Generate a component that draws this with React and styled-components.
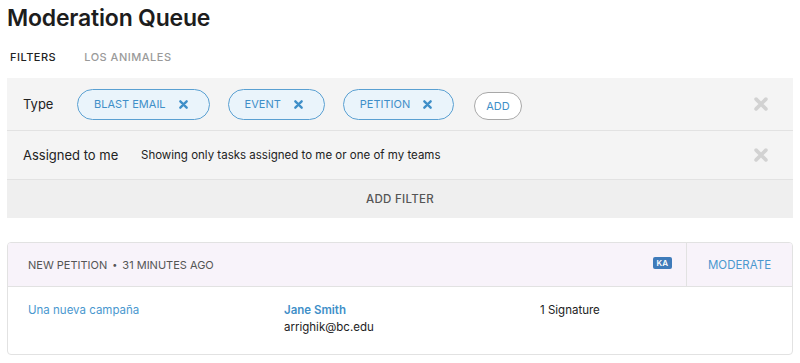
import styled, { createGlobalStyle } from "styled-components";

const GlobalStyle = createGlobalStyle`
  body {
    margin: 0;
    background: #fff;
    font-family: Inter, "Noto Sans", sans-serif;
    color: #222;
  }
`;

const filterTypes = ["BLAST EMAIL", "EVENT", "PETITION"];

const CloseIcon = ({ size = 10, color = "#3f8fc8" }) => (
  <svg width={size} height={size} viewBox="0 0 10 10">
    <path
      d="M1.5 1.5 L8.5 8.5 M8.5 1.5 L1.5 8.5"
      stroke={color}
      strokeWidth="2.6"
      strokeLinecap="round"
    />
  </svg>
);

const App = () => {
  return (
    <Page>
      <GlobalStyle />
      <Title>Moderation Queue</Title>
      <Tabs>
        <Tab active>FILTERS</Tab>
        <Tab>LOS ANIMALES</Tab>
      </Tabs>
      <FilterPanel>
        <FilterRow height={53}>
          <RowLabel width={54}>Type</RowLabel>
          <Pills>
            {filterTypes.map((it) => (
              <Pill key={it}>
                {it}
                <CloseIcon size={9} />
              </Pill>
            ))}
            <AddButton>ADD</AddButton>
          </Pills>
          <RemoveButton>
            <CloseIcon size={14} color="#d2d2d2" />
          </RemoveButton>
        </FilterRow>
        <FilterRow height={49}>
          <RowLabel width={118}>Assigned to me</RowLabel>
          <RowText>Showing only tasks assigned to me or one of my teams</RowText>
          <RemoveButton>
            <CloseIcon size={14} color="#d2d2d2" />
          </RemoveButton>
        </FilterRow>
        <AddFilter>ADD FILTER</AddFilter>
      </FilterPanel>

      <Card>
        <CardHeader>
          <HeaderInfo>
            NEW PETITION <Dot>•</Dot> 31 MINUTES AGO
            <Badge>KA</Badge>
          </HeaderInfo>
          <ModerateButton>MODERATE</ModerateButton>
        </CardHeader>
        <CardBody>
          <Cell>
            <Link>Una nueva campaña</Link>
          </Cell>
          <Cell>
            <Name>Jane Smith</Name>
            <Email>arrighik@bc.edu</Email>
          </Cell>
          <Cell>1 Signature</Cell>
        </CardBody>
      </Card>
    </Page>
  );
};

const Page = styled.div`
  padding: 0 7px;
`;
const Title = styled.h1`
  margin: 0;
  padding-top: 4px;
  font-size: 23px;
  font-weight: 600;
  line-height: 28px;
  color: #1d1d1d;
  letter-spacing: -0.2px;
`;
const Tabs = styled.div`
  display: flex;
  gap: 28px;
  padding: 18px 0 0 3px;
  height: 27px;
  box-sizing: border-box;
  margin-bottom: 19px;
`;
const Tab = styled.div`
  font-size: 11px;
  font-weight: 500;
  letter-spacing: 0.5px;
  color: ${(p) => (p.active ? "#222" : "#9a9a9a")};
`;
const FilterPanel = styled.div`
  background: #f4f4f4;
`;
const FilterRow = styled.div`
  display: flex;
  align-items: center;
  height: ${(p) => p.height}px;
  box-sizing: border-box;
  padding: 0 25px 0 16px;
  border-bottom: 1px solid #e2e2e2;
`;
const RowLabel = styled.div`
  width: ${(p) => p.width}px;
  flex-shrink: 0;
  font-size: 13px;
  color: #222;
`;
const RowText = styled.div`
  flex: 1;
  font-size: 11.5px;
  color: #222;
`;
const Pills = styled.div`
  flex: 1;
  display: flex;
  align-items: center;
  gap: 18px;
`;
const Pill = styled.div`
  display: flex;
  align-items: center;
  gap: 13px;
  height: 31px;
  box-sizing: border-box;
  padding: 0 21px 0 16px;
  border: 1px solid #5aa0d2;
  border-radius: 16px;
  background: #eaf4fb;
  color: #3f8fc8;
  font-size: 11px;
`;
const AddButton = styled.button`
  margin-left: 2px;
  margin-top: 4px;
  height: 28px;
  padding: 0 11px;
  border: 1px solid #a8a8a8;
  border-radius: 14px;
  background: #fff;
  color: #3f8fc8;
  font-family: inherit;
  font-size: 11px;
`;
const RemoveButton = styled.div`
  display: flex;
  align-items: center;
`;
const AddFilter = styled.div`
  height: 38px;
  display: flex;
  align-items: center;
  justify-content: center;
  background: #efefef;
  font-size: 11.5px;
  font-weight: 500;
  letter-spacing: 0.3px;
  color: #555;
`;
const Card = styled.div`
  margin-top: 24px;
  border: 1px solid #e2e2e2;
  border-radius: 4px;
  overflow: hidden;
`;
const CardHeader = styled.div`
  display: flex;
  height: 43px;
  background: #f8f3fa;
  border-bottom: 1px solid #e2e2e2;
`;
const HeaderInfo = styled.div`
  flex: 1;
  display: flex;
  align-items: center;
  padding: 0 14px 0 20px;
  font-size: 11px;
  color: #555;
`;
const Dot = styled.span`
  margin: 0 5px;
  font-size: 9px;
`;
const Badge = styled.span`
  margin-left: auto;
  margin-top: -4px;
  padding: 1px 4px;
  border-radius: 2px;
  background: #3f7bba;
  color: #fff;
  font-size: 8px;
  font-weight: 600;
`;
const ModerateButton = styled.div`
  width: 105px;
  display: flex;
  align-items: center;
  justify-content: center;
  border-left: 1px solid #e2e2e2;
  color: #4a98cf;
  font-size: 11.5px;
`;
const CardBody = styled.div`
  display: grid;
  grid-template-columns: 256px 256px 1fr;
  padding: 15px 20px 18px;
  font-size: 11.5px;
  line-height: 17px;
`;
const Cell = styled.div`
  color: #222;
`;
const Link = styled.div`
  color: #4a98cf;
`;
const Name = styled.div`
  color: #3f8fc8;
  font-weight: 600;
`;
const Email = styled.div`
  color: #222;
`;

export default App;
